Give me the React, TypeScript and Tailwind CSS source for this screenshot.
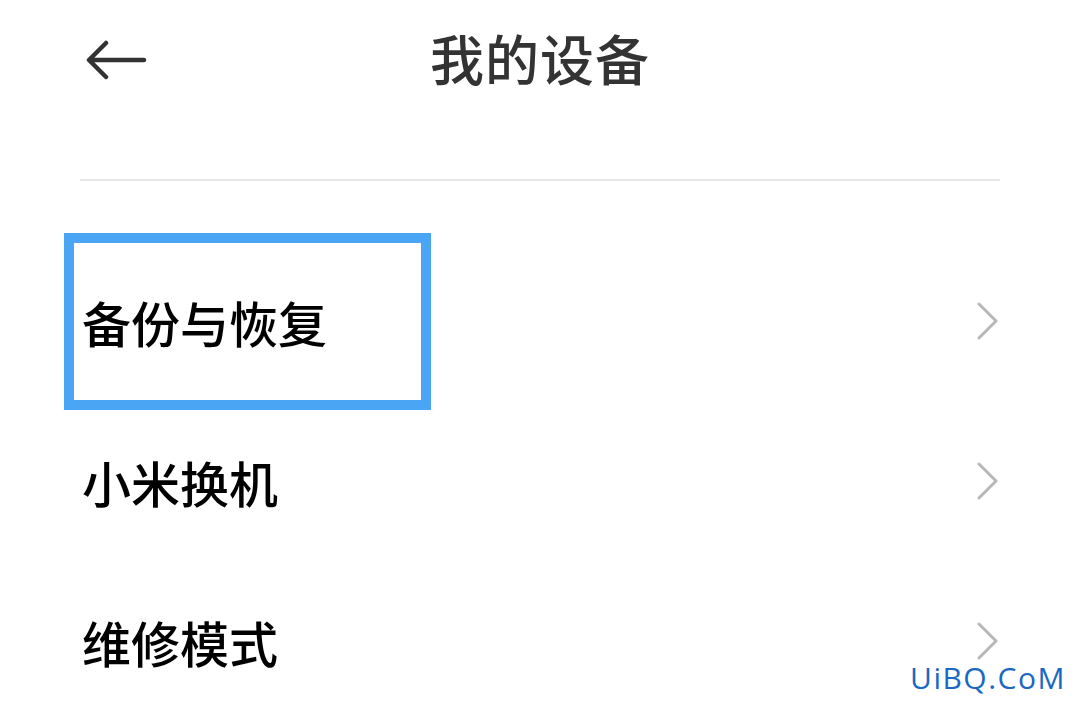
import React from "react";

const rows = ["备份与恢复", "小米换机", "维修模式"];

function Chevron() {
  return (
    <svg width="24" height="38" viewBox="0 0 24 38" fill="none">
      <path d="M3 2 L20 19 L3 36" stroke="#b8b8b8" strokeWidth="3" strokeLinecap="round" strokeLinejoin="round" />
    </svg>
  );
}

export default function App() {
  return (
    <div
      className="relative w-[1080px] h-[703px] overflow-hidden bg-white"
      style={{ fontFamily: '"Noto Sans CJK SC", "Noto Sans", sans-serif' }}
    >
      {/* Header */}
      <div className="relative flex h-[116px] items-center justify-center">
        <svg className="absolute left-[86px] top-[40px]" width="62" height="40" viewBox="0 0 62 40" fill="none">
          <path d="M58 20 H4 M20 3 L3 20 L20 37" stroke="#333333" strokeWidth="4.5" strokeLinecap="round" strokeLinejoin="round" />
        </svg>
        <h1 className="text-[54px] font-medium leading-none tracking-[1px] text-[#333333]">我的设备</h1>
      </div>

      <div className="mx-[80px] mt-[63px] h-[2px] bg-[#e6e6e6]" />

      {/* List */}
      <div className="relative mt-[60px]">
        <div className="absolute left-[64px] top-[-8px] h-[177px] w-[367px] border-[10px] border-[#4aa6f4]" />
        {rows.map((label) => (
          <div key={label} className="flex h-[160px] items-center justify-between pl-[82px] pr-[80px]">
            <span className="text-[49px] font-medium leading-none text-black">{label}</span>
            <Chevron />
          </div>
        ))}
      </div>

      <div
        className="absolute bottom-[10px] right-[14px] text-[30px] font-medium leading-none tracking-[1.5px] text-[#1a68c4]"
        style={{ fontFamily: '"Open Sans", sans-serif' }}
      >
        UiBQ.CoM
      </div>
    </div>
  );
}
